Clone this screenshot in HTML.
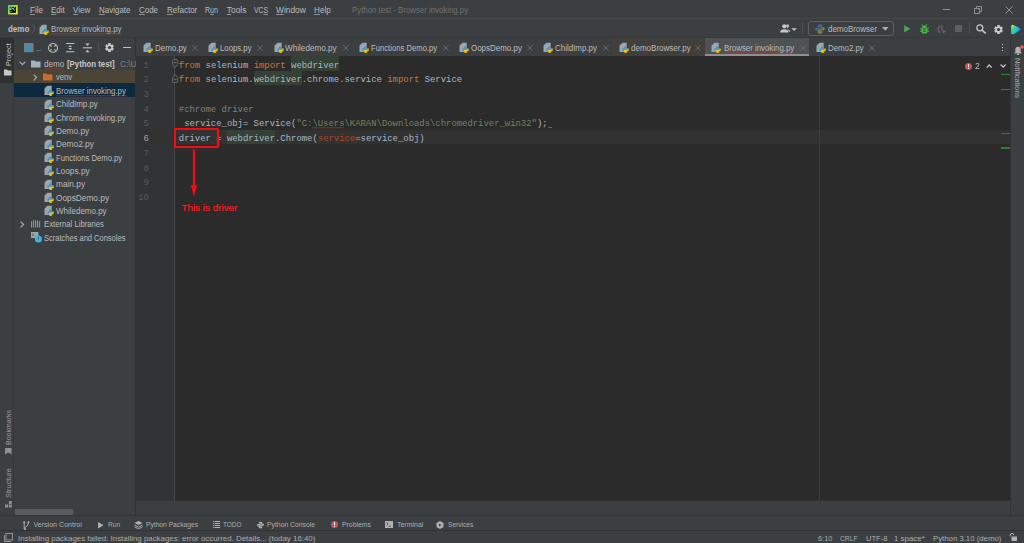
<!DOCTYPE html>
<html><head><meta charset="utf-8">
<style>
*{margin:0;padding:0;box-sizing:border-box}
html,body{width:1024px;height:543px;overflow:hidden;background:#3c3f41;font-family:"Liberation Sans",sans-serif;color:#bbbbbb}
.a{position:absolute}
.t{white-space:pre;line-height:1}
svg.a{overflow:visible}
</style></head><body>
<svg width="0" height="0" style="position:absolute">
<defs>
<symbol id="py" viewBox="0 0 11 11">
<path d="M0.5 3.6L3.3 0.8H7.7V10H0.5Z" fill="#9ba6ae"/>
<path d="M0.5 2.9L2.6 0.8V2.9Z" fill="#9ba6ae"/>
<path d="M0.5 3.5L3.4 0.6" stroke="#3c3f41" stroke-width="0.7"/>
<g transform="translate(3.4 4.5) scale(0.64)">
<path d="M4.9 0C2.4 0 2.5 1.1 2.5 1.1V2.2H5V2.6H1.5C1.5 2.6 0 2.4 0 5C0 7.5 1.3 7.4 1.3 7.4H2.2V6.2C2.2 6.2 2.1 4.9 3.5 4.9H5.9C5.9 4.9 7.2 4.9 7.2 3.7V1.5C7.2 1.5 7.4 0 4.9 0Z" fill="#3b97d3"/>
<path d="M5.1 10C7.6 10 7.5 8.9 7.5 8.9V7.8H5V7.4H8.5C8.5 7.4 10 7.6 10 5C10 2.5 8.7 2.6 8.7 2.6H7.8V3.8C7.8 3.8 7.9 5.1 6.5 5.1H4.1C4.1 5.1 2.8 5.1 2.8 6.3V8.5C2.8 8.5 2.6 10 5.1 10Z" fill="#f5c30c"/>
</g>
</symbol>
</defs></svg>

<div class="a" style="left:0px;top:0px;width:1024px;height:18px;background:#3c3f41;"></div>
<div class="a" style="left:0px;top:18px;width:1024px;height:1px;background:#464646;"></div>
<svg class="a" style="left:8.4px;top:4.7px" width="10" height="10" viewBox="0 0 10 10"><defs><linearGradient id="lg" x1="0" y1="0" x2="1" y2="1"><stop offset="0" stop-color="#21d789"/><stop offset="0.55" stop-color="#b5e61d"/><stop offset="1" stop-color="#fcf84a"/></linearGradient></defs><rect x="0" y="0" width="9.7" height="9.4" fill="url(#lg)"/><rect x="1.8" y="1.9" width="6.1" height="5.9" fill="#000"/><path d="M2.6 5.2V2.8H3.8Q4.6 2.8 4.6 3.5Q4.6 4.2 3.8 4.2H2.6" fill="none" stroke="#d8d8d8" stroke-width="0.8"/><path d="M7.2 3.1Q6.9 2.8 6.3 2.8Q5.2 2.8 5.2 4Q5.2 5.2 6.3 5.2Q6.9 5.2 7.2 4.9" fill="none" stroke="#d8d8d8" stroke-width="0.8"/><rect x="2.4" y="6.4" width="1.8" height="0.6" fill="#bbb"/></svg>
<div class="a t" style="left:29.5px;top:5.76px;font-family:'Liberation Sans',sans-serif;font-size:8.400px;transform-origin:0 0;transform:scaleX(0.963);color:#bbbbbb;font-weight:normal;"><span style="text-decoration:underline;text-decoration-color:#8f8f8f;text-underline-offset:1px">F</span>ile</div>
<div class="a t" style="left:50.6px;top:5.76px;font-family:'Liberation Sans',sans-serif;font-size:8.400px;transform-origin:0 0;transform:scaleX(0.953);color:#bbbbbb;font-weight:normal;"><span style="text-decoration:underline;text-decoration-color:#8f8f8f;text-underline-offset:1px">E</span>dit</div>
<div class="a t" style="left:72.6px;top:5.76px;font-family:'Liberation Sans',sans-serif;font-size:8.400px;transform-origin:0 0;transform:scaleX(0.956);color:#bbbbbb;font-weight:normal;"><span style="text-decoration:underline;text-decoration-color:#8f8f8f;text-underline-offset:1px">V</span>iew</div>
<div class="a t" style="left:98.9px;top:5.76px;font-family:'Liberation Sans',sans-serif;font-size:8.400px;transform-origin:0 0;transform:scaleX(0.952);color:#bbbbbb;font-weight:normal;"><span style="text-decoration:underline;text-decoration-color:#8f8f8f;text-underline-offset:1px">N</span>avigate</div>
<div class="a t" style="left:138.8px;top:5.76px;font-family:'Liberation Sans',sans-serif;font-size:8.400px;transform-origin:0 0;transform:scaleX(0.950);color:#bbbbbb;font-weight:normal;"><span style="text-decoration:underline;text-decoration-color:#8f8f8f;text-underline-offset:1px">C</span>ode</div>
<div class="a t" style="left:166.7px;top:5.76px;font-family:'Liberation Sans',sans-serif;font-size:8.400px;transform-origin:0 0;transform:scaleX(0.956);color:#bbbbbb;font-weight:normal;"><span style="text-decoration:underline;text-decoration-color:#8f8f8f;text-underline-offset:1px">R</span>efactor</div>
<div class="a t" style="left:204.8px;top:5.76px;font-family:'Liberation Sans',sans-serif;font-size:8.400px;transform-origin:0 0;transform:scaleX(0.842);color:#bbbbbb;font-weight:normal;">R<span style="text-decoration:underline;text-decoration-color:#8f8f8f;text-underline-offset:1px">u</span>n</div>
<div class="a t" style="left:226.8px;top:5.76px;font-family:'Liberation Sans',sans-serif;font-size:8.400px;color:#bbbbbb;font-weight:normal;"><span style="text-decoration:underline;text-decoration-color:#8f8f8f;text-underline-offset:1px">T</span>ools</div>
<div class="a t" style="left:254px;top:5.76px;font-family:'Liberation Sans',sans-serif;font-size:8.400px;transform-origin:0 0;transform:scaleX(0.813);color:#bbbbbb;font-weight:normal;">VC<span style="text-decoration:underline;text-decoration-color:#8f8f8f;text-underline-offset:1px">S</span></div>
<div class="a t" style="left:276px;top:5.76px;font-family:'Liberation Sans',sans-serif;font-size:8.400px;color:#bbbbbb;font-weight:normal;"><span style="text-decoration:underline;text-decoration-color:#8f8f8f;text-underline-offset:1px">W</span>indow</div>
<div class="a t" style="left:314.3px;top:5.76px;font-family:'Liberation Sans',sans-serif;font-size:8.400px;transform-origin:0 0;transform:scaleX(0.971);color:#bbbbbb;font-weight:normal;"><span style="text-decoration:underline;text-decoration-color:#8f8f8f;text-underline-offset:1px">H</span>elp</div>
<div class="a t" style="left:352.2px;top:5.84px;font-family:'Liberation Sans',sans-serif;font-size:8.300px;transform-origin:0 0;transform:scaleX(0.943);color:#6f6f6f;font-weight:normal;">Python test - Browser invoking.py</div>
<div class="a" style="left:943px;top:9px;width:7px;height:1px;background:#8e8e8e;"></div>
<svg class="a" style="left:974px;top:6px" width="8" height="8"><rect x="0.5" y="2.5" width="5" height="5" fill="none" stroke="#8e8e8e"/><path d="M2.5 2.5V0.5H7.5V5.5H5.5" fill="none" stroke="#8e8e8e"/></svg>
<svg class="a" style="left:1005px;top:6px" width="8" height="8"><path d="M0.5 0.5L7.5 7.5M7.5 0.5L0.5 7.5" stroke="#8e8e8e" stroke-width="1"/></svg>
<div class="a" style="left:0px;top:19px;width:1024px;height:19px;background:#3c3f41;"></div>
<div class="a" style="left:0px;top:37px;width:1024px;height:1px;background:#37393b;"></div>
<div class="a t" style="left:8.3px;top:24.95px;font-family:'Liberation Sans',sans-serif;font-size:8.300px;transform-origin:0 0;transform:scaleX(0.960);color:#c0c0c0;font-weight:bold;">demo</div>
<svg class="a" style="left:31px;top:23px" width="5" height="11"><path d="M0.8 0.5L4 5.5L0.8 10.5" fill="none" stroke="#5e6060" stroke-width="0.9"/></svg>
<svg class="a" style="left:39px;top:24px" width="11" height="11" viewBox="0 0 11 11"><use href="#py"/></svg>
<div class="a t" style="left:50.8px;top:24.95px;font-family:'Liberation Sans',sans-serif;font-size:8.300px;transform-origin:0 0;transform:scaleX(0.949);color:#bbbbbb;font-weight:normal;">Browser invoking.py</div>
<svg class="a" style="left:51px;top:33px" width="71" height="2"><path d="M0 1.2L1.0 0.4L2.0 1.2L3.0 0.4L4.0 1.2L5.0 0.4L6.0 1.2L7.0 0.4L8.0 1.2L9.0 0.4L10.0 1.2L11.0 0.4L12.0 1.2L13.0 0.4L14.0 1.2L15.0 0.4L16.0 1.2L17.0 0.4L18.0 1.2L19.0 0.4L20.0 1.2L21.0 0.4L22.0 1.2L23.0 0.4L24.0 1.2L25.0 0.4L26.0 1.2L27.0 0.4L28.0 1.2L29.0 0.4L30.0 1.2L31.0 0.4L32.0 1.2L33.0 0.4L34.0 1.2L35.0 0.4L36.0 1.2L37.0 0.4L38.0 1.2L39.0 0.4L40.0 1.2L41.0 0.4L42.0 1.2L43.0 0.4L44.0 1.2L45.0 0.4L46.0 1.2L47.0 0.4L48.0 1.2L49.0 0.4L50.0 1.2L51.0 0.4L52.0 1.2L53.0 0.4L54.0 1.2L55.0 0.4L56.0 1.2L57.0 0.4L58.0 1.2L59.0 0.4L60.0 1.2L61.0 0.4L62.0 1.2L63.0 0.4L64.0 1.2L65.0 0.4L66.0 1.2L67.0 0.4L68.0 1.2L69.0 0.4L70.0 1.2" fill="none" stroke="#bc3f3c" stroke-width="0.7" opacity="0.85"/></svg>
<svg class="a" style="left:779.5px;top:24.3px" width="18" height="10"><path d="M6 1.8Q6 0.2 7.6 0.2Q9.2 0.2 9.2 1.9Q9.2 3.6 7.6 3.8V5.3Q10.3 5.6 10.3 7.8H8.8Z" fill="#b4b6b8"/><circle cx="4.3" cy="2.3" r="2.1" fill="#c4c6c8"/><path d="M0.2 8.5Q0.2 5.3 4.3 5.3Q8.4 5.3 8.4 8.5Z" fill="#c4c6c8"/><path d="M11.4 4.3H16.8L14.1 6.9Z" fill="#c4c6c8"/></svg>
<div class="a" style="left:802px;top:22px;width:1px;height:12px;background:#4a4c4e;"></div>
<div class="a" style="left:808px;top:21px;width:86px;height:15px;border:1px solid #5e6060;border-radius:3px"></div>
<svg class="a" style="left:815px;top:23.5px" width="10" height="10" viewBox="0 0 10 10"><path d="M5 0.3Q2.6 0.3 2.6 1.6V3H5.2V3.5H1.6Q0.2 3.5 0.2 5.3Q0.2 7.1 1.6 7.1H2.6V5.8Q2.6 4.7 3.7 4.7H6.3Q7.3 4.7 7.3 3.7V1.6Q7.3 0.3 5 0.3Z" fill="#3d6a88"/><path d="M5 9.7Q7.4 9.7 7.4 8.4V7H4.8V6.5H8.4Q9.8 6.5 9.8 4.7Q9.8 2.9 8.4 2.9H7.4V4.2Q7.4 5.3 6.3 5.3H3.7Q2.7 5.3 2.7 6.3V8.4Q2.7 9.7 5 9.7Z" fill="#8a7b3a"/></svg>
<div class="a t" style="left:827.5px;top:24.95px;font-family:'Liberation Sans',sans-serif;font-size:8.300px;transform-origin:0 0;transform:scaleX(0.959);color:#bbbbbb;font-weight:normal;">demoBrowser</div>
<svg class="a" style="left:882px;top:26.5px" width="7" height="5"><path d="M0 0H6.5L3.25 3.8Z" fill="#afb1b3"/></svg>
<svg class="a" style="left:903.8px;top:25px" width="7" height="8"><path d="M0.2 0.2L6.4 3.8L0.2 7.4Z" fill="#4ea257"/></svg>
<svg class="a" style="left:919.5px;top:24.4px" width="9" height="10" viewBox="0 0 9 10"><path d="M2 0.3L3.2 1.8M7 0.3L5.8 1.8" stroke="#4fb34f" stroke-width="1"/><path d="M2.2 2.2Q4.5 0.9 6.8 2.2V3H2.2Z" fill="#4fb34f"/><rect x="1.4" y="3" width="6.2" height="6.6" rx="2.6" fill="#4fb34f"/><path d="M0 4.2H1.6M7.4 4.2H9M0 7.2H1.6M7.4 7.2H9" stroke="#4fb34f" stroke-width="1"/><rect x="3.2" y="4.4" width="2.6" height="1" fill="#2b3a2b"/><rect x="3.2" y="6.6" width="2.6" height="1" fill="#2b3a2b"/></svg>
<svg class="a" style="left:936.8px;top:25px" width="10" height="9"><path d="M3.5 0.3Q0.3 0.3 0.3 4.2Q0.3 8 3.5 8V6.2Q2.1 6.2 2.1 4.2Q2.1 2.1 3.5 2.1Z" fill="#5c5f61"/><path d="M4 0.3H5.6V5.3H4Z" fill="#5c5f61"/><path d="M5.6 4.2L9.4 6.4L5.6 8.6Z" fill="#5c5f61"/></svg>
<div class="a" style="left:955px;top:25.4px;width:7px;height:6.8px;background:#5c5f61;"></div>
<div class="a" style="left:969px;top:22px;width:1px;height:12px;background:#4a4c4e;"></div>
<svg class="a" style="left:975.5px;top:24px" width="11" height="11"><circle cx="3.8" cy="3.8" r="3" fill="none" stroke="#c8c8c8" stroke-width="1.3"/><path d="M6 6L9.6 9.4" stroke="#c8c8c8" stroke-width="1.6"/></svg>
<svg class="a" style="left:993.6px;top:24.5px" width="9" height="9" viewBox="0 0 8.4 8.4"><path d="M2.98 0.08L5.42 0.08L5.30 1.19L6.25 1.75L7.16 1.08L8.38 3.20L7.35 3.65L7.35 4.75L8.38 5.20L7.16 7.32L6.25 6.65L5.30 7.21L5.42 8.32L2.98 8.32L3.10 7.21L2.15 6.65L1.24 7.32L0.02 5.20L1.05 4.75L1.05 3.65L0.02 3.20L1.24 1.08L2.15 1.75L3.10 1.19Z" fill="#c8c8c8"/><circle cx="4.2" cy="4.2" r="1.5" fill="#3c3f41"/></svg>
<svg class="a" style="left:1010.5px;top:23.6px" width="10" height="11" viewBox="0 0 10 10.4"><defs><linearGradient id="tb" x1="0" y1="0" x2="1" y2="0.6"><stop offset="0" stop-color="#f2ef5a"/><stop offset="0.35" stop-color="#3fd880"/><stop offset="0.65" stop-color="#22c3e6"/><stop offset="1" stop-color="#2160c8"/></linearGradient></defs><path d="M0.2 2.2Q0.2 -0.3 2.6 0.7L8.8 4Q10.4 5.2 8.8 6.4L2.6 9.7Q0.2 10.9 0.2 8.2Z" fill="url(#tb)"/></svg>
<div class="a" style="left:0px;top:38px;width:14px;height:478px;background:#3c3f41;"></div>
<div class="a" style="left:13px;top:38px;width:1px;height:478px;background:#37393b;"></div>
<div class="a" style="left:0px;top:38px;width:13.6px;height:44.5px;background:#2e3032;"></div>
<div class="a t" style="left:5px;top:65.5px;transform-origin:0 0;transform:rotate(-90deg);font-family:'Liberation Sans',sans-serif;font-size:7.3px;color:#bbbbbb;width:22px;height:7px;line-height:7px">Project</div>
<svg class="a" style="left:4px;top:68.8px" width="8" height="7"><path d="M0 0.5H3L4 1.5H7.5V6.5H0Z" fill="#c5c8ca"/></svg>
<div class="a t" style="left:5px;top:445px;transform-origin:0 0;transform:rotate(-90deg);font-family:'Liberation Sans',sans-serif;font-size:7.0px;color:#9c9c9c;width:35px;height:7px;line-height:7px">Bookmarks</div>
<svg class="a" style="left:4.5px;top:448px" width="7" height="7"><path d="M0 0H6.5V6.5L3.25 4.6L0 6.5Z" fill="#8e9092"/></svg>
<div class="a t" style="left:5px;top:497.5px;transform-origin:0 0;transform:rotate(-90deg);font-family:'Liberation Sans',sans-serif;font-size:7.35px;color:#9c9c9c;width:28px;height:7px;line-height:7px">Structure</div>
<svg class="a" style="left:4.5px;top:500.5px" width="7" height="7"><rect x="0" y="3.5" width="3" height="3" fill="#8e9092"/><rect x="3.8" y="3.5" width="3" height="3" fill="#8e9092"/><rect x="3.8" y="0" width="3" height="3" fill="#8e9092"/></svg>
<div class="a" style="left:14px;top:38px;width:122px;height:478px;background:#3c3f41;"></div>
<div class="a" style="left:135px;top:38px;width:1px;height:478px;background:#323334;"></div>
<svg class="a" style="left:23.5px;top:43.1px" width="10" height="10"><rect x="0" y="0" width="9.5" height="9.2" fill="#7b7e80"/><rect x="1.3" y="1.9" width="6.9" height="6" fill="#3a8fb3"/></svg>
<div class="a" style="left:36px;top:49.6px;width:5px;height:1px;background:#55656f;"></div>
<svg class="a" style="left:47.7px;top:42.7px" width="11" height="10"><circle cx="5" cy="4.9" r="4.4" fill="none" stroke="#c0c0c0" stroke-width="1.1"/><path d="M2.2 2.1L3.6 3.5M7.8 2.1L6.4 3.5M2.2 7.7L3.6 6.3M7.8 7.7L6.4 6.3" stroke="#c0c0c0" stroke-width="1.1"/></svg>
<svg class="a" style="left:65.7px;top:43px" width="9" height="10"><path d="M0 0.5H8.4M0 8.7H8.4" stroke="#c0c0c0" stroke-width="1.1"/><path d="M2.3 4.1L4.2 2.2L6.1 4.1ZM2.3 5.1L4.2 7L6.1 5.1Z" fill="#c0c0c0"/></svg>
<svg class="a" style="left:82.8px;top:42.8px" width="9" height="10"><path d="M0 4.8H9" stroke="#c0c0c0" stroke-width="1.1"/><path d="M2.4 0.4L4.5 2.9L6.6 0.4ZM2.4 9.3L4.5 6.8L6.6 9.3Z" fill="#c0c0c0"/></svg>
<div class="a" style="left:98px;top:42px;width:1px;height:11px;background:#4c4e50;"></div>
<svg class="a" style="left:105px;top:42.7px" width="9" height="9" viewBox="0 0 8.4 8.4"><path d="M2.98 0.08L5.42 0.08L5.30 1.19L6.25 1.75L7.16 1.08L8.38 3.20L7.35 3.65L7.35 4.75L8.38 5.20L7.16 7.32L6.25 6.65L5.30 7.21L5.42 8.32L2.98 8.32L3.10 7.21L2.15 6.65L1.24 7.32L0.02 5.20L1.05 4.75L1.05 3.65L0.02 3.20L1.24 1.08L2.15 1.75L3.10 1.19Z" fill="#c8c8c8"/><circle cx="4.2" cy="4.2" r="1.5" fill="#3c3f41"/></svg>
<div class="a" style="left:123px;top:47px;width:8px;height:1.2px;background:#c0c0c0;"></div>
<div class="a" style="left:14px;top:69.85px;width:121px;height:13.35px;background:#4a4537;"></div>
<div class="a" style="left:14px;top:83.2px;width:121px;height:13.35px;background:#0d293e;"></div>
<svg class="a" style="left:19px;top:61.00px" width="7" height="5"><path d="M0.6 0.6L3.5 3.6L6.4 0.6" fill="none" stroke="#a8a8a8" stroke-width="1.25"/></svg>
<svg class="a" style="left:31px;top:59.50px" width="10" height="8"><path d="M0 0.5H3.5L4.5 1.6H9.5V7.5H0Z" fill="#a4b2bd"/></svg>
<div class="a t" style="left:43.5px;top:60.15px;font-family:'Liberation Sans',sans-serif;font-size:8.300px;transform-origin:0 0;transform:scaleX(0.977);color:#bbbbbb;font-weight:normal;">demo</div>
<div class="a t" style="left:67px;top:60.15px;font-family:'Liberation Sans',sans-serif;font-size:8.300px;transform-origin:0 0;transform:scaleX(0.941);color:#c8c8c8;font-weight:bold;">[Python test]</div>
<div class="a t" style="left:120px;top:60.15px;font-family:'Liberation Sans',sans-serif;font-size:8.3px;color:#7f7f7f;font-weight:normal;">C:\Users\KARAN\PycharmProjects\demo</div>
<svg class="a" style="left:43.5px;top:67.8px" width="21.5" height="2"><path d="M0 1.2L1.0 0.4L2.0 1.2L3.0 0.4L4.0 1.2L5.0 0.4L6.0 1.2L7.0 0.4L8.0 1.2L9.0 0.4L10.0 1.2L11.0 0.4L12.0 1.2L13.0 0.4L14.0 1.2L15.0 0.4L16.0 1.2L17.0 0.4L18.0 1.2L19.0 0.4L20.0 1.2" fill="none" stroke="#bc3f3c" stroke-width="0.7" opacity="0.85"/></svg>
<svg class="a" style="left:33px;top:73.65px" width="5" height="7"><path d="M0.6 0.6L3.6 3.5L0.6 6.4" fill="none" stroke="#a8a8a8" stroke-width="1.25"/></svg>
<svg class="a" style="left:43px;top:72.85px" width="10" height="8"><path d="M0 0.5H3.5L4.5 1.6H9.5V7.5H0Z" fill="#c96c2e"/></svg>
<div class="a t" style="left:55.5px;top:73.49px;font-family:'Liberation Sans',sans-serif;font-size:8.300px;transform-origin:0 0;transform:scaleX(0.918);color:#bbbbbb;font-weight:normal;">venv</div>
<svg class="a" style="left:44px;top:85.2px" width="11" height="11" viewBox="0 0 11 11"><use href="#py"/></svg>
<svg class="a" style="left:56px;top:94.5px" width="72" height="2"><path d="M0 1.2L1.0 0.4L2.0 1.2L3.0 0.4L4.0 1.2L5.0 0.4L6.0 1.2L7.0 0.4L8.0 1.2L9.0 0.4L10.0 1.2L11.0 0.4L12.0 1.2L13.0 0.4L14.0 1.2L15.0 0.4L16.0 1.2L17.0 0.4L18.0 1.2L19.0 0.4L20.0 1.2L21.0 0.4L22.0 1.2L23.0 0.4L24.0 1.2L25.0 0.4L26.0 1.2L27.0 0.4L28.0 1.2L29.0 0.4L30.0 1.2L31.0 0.4L32.0 1.2L33.0 0.4L34.0 1.2L35.0 0.4L36.0 1.2L37.0 0.4L38.0 1.2L39.0 0.4L40.0 1.2L41.0 0.4L42.0 1.2L43.0 0.4L44.0 1.2L45.0 0.4L46.0 1.2L47.0 0.4L48.0 1.2L49.0 0.4L50.0 1.2L51.0 0.4L52.0 1.2L53.0 0.4L54.0 1.2L55.0 0.4L56.0 1.2L57.0 0.4L58.0 1.2L59.0 0.4L60.0 1.2L61.0 0.4L62.0 1.2L63.0 0.4L64.0 1.2L65.0 0.4L66.0 1.2L67.0 0.4L68.0 1.2L69.0 0.4L70.0 1.2L71.0 0.4" fill="none" stroke="#bc3f3c" stroke-width="0.7" opacity="0.85"/></svg>
<div class="a t" style="left:56px;top:86.84px;font-family:'Liberation Sans',sans-serif;font-size:8.300px;transform-origin:0 0;transform:scaleX(0.941);color:#bbbbbb;font-weight:normal;">Browser invoking.py</div>
<svg class="a" style="left:44px;top:98.55px" width="11" height="11" viewBox="0 0 11 11"><use href="#py"/></svg>
<div class="a t" style="left:56px;top:100.19px;font-family:'Liberation Sans',sans-serif;font-size:8.300px;transform-origin:0 0;transform:scaleX(0.955);color:#bbbbbb;font-weight:normal;">ChildImp.py</div>
<svg class="a" style="left:44px;top:111.9px" width="11" height="11" viewBox="0 0 11 11"><use href="#py"/></svg>
<div class="a t" style="left:56px;top:113.55px;font-family:'Liberation Sans',sans-serif;font-size:8.300px;transform-origin:0 0;transform:scaleX(0.951);color:#bbbbbb;font-weight:normal;">Chrome invoking.py</div>
<svg class="a" style="left:44px;top:125.25px" width="11" height="11" viewBox="0 0 11 11"><use href="#py"/></svg>
<div class="a t" style="left:56px;top:126.89px;font-family:'Liberation Sans',sans-serif;font-size:8.3px;color:#bbbbbb;font-weight:normal;">Demo.py</div>
<svg class="a" style="left:44px;top:138.6px" width="11" height="11" viewBox="0 0 11 11"><use href="#py"/></svg>
<div class="a t" style="left:56px;top:140.24px;font-family:'Liberation Sans',sans-serif;font-size:8.3px;color:#bbbbbb;font-weight:normal;">Demo2.py</div>
<svg class="a" style="left:44px;top:151.95px" width="11" height="11" viewBox="0 0 11 11"><use href="#py"/></svg>
<div class="a t" style="left:56px;top:153.59px;font-family:'Liberation Sans',sans-serif;font-size:8.300px;transform-origin:0 0;transform:scaleX(0.926);color:#bbbbbb;font-weight:normal;">Functions Demo.py</div>
<svg class="a" style="left:44px;top:165.3px" width="11" height="11" viewBox="0 0 11 11"><use href="#py"/></svg>
<div class="a t" style="left:56px;top:166.94px;font-family:'Liberation Sans',sans-serif;font-size:8.3px;color:#bbbbbb;font-weight:normal;">Loops.py</div>
<svg class="a" style="left:44px;top:178.64999999999998px" width="11" height="11" viewBox="0 0 11 11"><use href="#py"/></svg>
<div class="a t" style="left:56px;top:180.29px;font-family:'Liberation Sans',sans-serif;font-size:8.3px;color:#bbbbbb;font-weight:normal;">main.py</div>
<svg class="a" style="left:44px;top:192.0px" width="11" height="11" viewBox="0 0 11 11"><use href="#py"/></svg>
<div class="a t" style="left:56px;top:193.64px;font-family:'Liberation Sans',sans-serif;font-size:8.3px;color:#bbbbbb;font-weight:normal;">OopsDemo.py</div>
<svg class="a" style="left:44px;top:205.35px" width="11" height="11" viewBox="0 0 11 11"><use href="#py"/></svg>
<div class="a t" style="left:56px;top:206.99px;font-family:'Liberation Sans',sans-serif;font-size:8.300px;transform-origin:0 0;transform:scaleX(0.962);color:#bbbbbb;font-weight:normal;">Whiledemo.py</div>
<svg class="a" style="left:20px;top:220.50px" width="5" height="7"><path d="M0.6 0.6L3.6 3.5L0.6 6.4" fill="none" stroke="#a8a8a8" stroke-width="1.25"/></svg>
<svg class="a" style="left:31.3px;top:219.50px" width="10" height="9"><path d="M0.6 1.2V7.6" stroke="#8a9399" stroke-width="1.1"/><path d="M2.6 0.2V7.6" stroke="#8a9399" stroke-width="1.1"/><path d="M4.6 0.2V7.6" stroke="#62b543" stroke-width="1.1"/><path d="M6.6 0.2V7.6" stroke="#40b6e0" stroke-width="1.1"/><path d="M8.6 1.2V7.6" stroke="#8a9399" stroke-width="1.1"/></svg>
<div class="a t" style="left:43.8px;top:220.34px;font-family:'Liberation Sans',sans-serif;font-size:8.300px;transform-origin:0 0;transform:scaleX(0.929);color:#bbbbbb;font-weight:normal;">External Libraries</div>
<svg class="a" style="left:30.9px;top:232.05px" width="12" height="12"><rect x="0" y="0" width="7.4" height="6" fill="#9aa4ab"/><path d="M1.2 1.3L2.6 2.8L1.2 4.3" fill="none" stroke="#3c3f41" stroke-width="0.8"/><circle cx="7.4" cy="6.9" r="3.5" fill="#3fb4e2"/><path d="M7.3 4.8V7.4" stroke="#2a5a70" stroke-width="0.9"/></svg>
<div class="a t" style="left:43.6px;top:233.69px;font-family:'Liberation Sans',sans-serif;font-size:8.300px;transform-origin:0 0;transform:scaleX(0.905);color:#bbbbbb;font-weight:normal;">Scratches and Consoles</div>
<div class="a" style="left:15px;top:509.2px;width:57.7px;height:5.6px;background:#595b5d;"></div>
<div class="a" style="left:136px;top:38px;width:874px;height:18px;background:#3c3f41;"></div>
<div class="a" style="left:136px;top:55.6px;width:874px;height:0.6px;background:#323334;"></div>
<div class="a" style="left:612px;top:38px;width:92.7px;height:17.6px;background:#403f3b;"></div>
<div class="a" style="left:704.7px;top:38px;width:104.3px;height:17.6px;background:#4e5254;"></div>
<div class="a" style="left:704.7px;top:54px;width:104.3px;height:2px;background:#8d8f91;"></div>
<svg class="a" style="left:142.5px;top:42px" width="11" height="11" viewBox="0 0 11 11"><use href="#py"/></svg>
<div class="a t" style="left:154.7px;top:44.15px;font-family:'Liberation Sans',sans-serif;font-size:8.300px;transform-origin:0 0;transform:scaleX(0.958);color:#bbbbbb;font-weight:normal;">Demo.py</div>
<svg class="a" style="left:191.8px;top:44.5px" width="6" height="6"><path d="M0.3 0.3L5.5 5.5M5.5 0.3L0.3 5.5" stroke="#6a6c6e" stroke-width="0.9"/></svg>
<svg class="a" style="left:208.1px;top:42px" width="11" height="11" viewBox="0 0 11 11"><use href="#py"/></svg>
<div class="a t" style="left:220.4px;top:44.15px;font-family:'Liberation Sans',sans-serif;font-size:8.300px;transform-origin:0 0;transform:scaleX(0.936);color:#bbbbbb;font-weight:normal;">Loops.py</div>
<svg class="a" style="left:256.7px;top:44.5px" width="6" height="6"><path d="M0.3 0.3L5.5 5.5M5.5 0.3L0.3 5.5" stroke="#6a6c6e" stroke-width="0.9"/></svg>
<svg class="a" style="left:273.8px;top:42px" width="11" height="11" viewBox="0 0 11 11"><use href="#py"/></svg>
<div class="a t" style="left:285.3px;top:44.15px;font-family:'Liberation Sans',sans-serif;font-size:8.300px;transform-origin:0 0;transform:scaleX(0.983);color:#bbbbbb;font-weight:normal;">Whiledemo.py</div>
<svg class="a" style="left:343px;top:44.5px" width="6" height="6"><path d="M0.3 0.3L5.5 5.5M5.5 0.3L0.3 5.5" stroke="#6a6c6e" stroke-width="0.9"/></svg>
<svg class="a" style="left:358.7px;top:42px" width="11" height="11" viewBox="0 0 11 11"><use href="#py"/></svg>
<div class="a t" style="left:370.6px;top:44.15px;font-family:'Liberation Sans',sans-serif;font-size:8.300px;transform-origin:0 0;transform:scaleX(0.926);color:#bbbbbb;font-weight:normal;">Functions Demo.py</div>
<svg class="a" style="left:442.8px;top:44.5px" width="6" height="6"><path d="M0.3 0.3L5.5 5.5M5.5 0.3L0.3 5.5" stroke="#6a6c6e" stroke-width="0.9"/></svg>
<svg class="a" style="left:458.9px;top:42px" width="11" height="11" viewBox="0 0 11 11"><use href="#py"/></svg>
<div class="a t" style="left:471.3px;top:44.15px;font-family:'Liberation Sans',sans-serif;font-size:8.300px;transform-origin:0 0;transform:scaleX(0.959);color:#bbbbbb;font-weight:normal;">OopsDemo.py</div>
<svg class="a" style="left:527px;top:44.5px" width="6" height="6"><path d="M0.3 0.3L5.5 5.5M5.5 0.3L0.3 5.5" stroke="#6a6c6e" stroke-width="0.9"/></svg>
<svg class="a" style="left:543.3px;top:42px" width="11" height="11" viewBox="0 0 11 11"><use href="#py"/></svg>
<div class="a t" style="left:554.9px;top:44.15px;font-family:'Liberation Sans',sans-serif;font-size:8.300px;transform-origin:0 0;transform:scaleX(0.959);color:#bbbbbb;font-weight:normal;">ChildImp.py</div>
<svg class="a" style="left:603px;top:44.5px" width="6" height="6"><path d="M0.3 0.3L5.5 5.5M5.5 0.3L0.3 5.5" stroke="#6a6c6e" stroke-width="0.9"/></svg>
<svg class="a" style="left:619.2px;top:42px" width="11" height="11" viewBox="0 0 11 11"><use href="#py"/></svg>
<div class="a t" style="left:631.3px;top:44.15px;font-family:'Liberation Sans',sans-serif;font-size:8.300px;transform-origin:0 0;transform:scaleX(0.966);color:#bbbbbb;font-weight:normal;">demoBrowser.py</div>
<svg class="a" style="left:695px;top:44.5px" width="6" height="6"><path d="M0.3 0.3L5.5 5.5M5.5 0.3L0.3 5.5" stroke="#6a6c6e" stroke-width="0.9"/></svg>
<svg class="a" style="left:711.4px;top:42px" width="11" height="11" viewBox="0 0 11 11"><use href="#py"/></svg>
<svg class="a" style="left:723.8px;top:51.8px" width="71" height="2"><path d="M0 1.2L1.0 0.4L2.0 1.2L3.0 0.4L4.0 1.2L5.0 0.4L6.0 1.2L7.0 0.4L8.0 1.2L9.0 0.4L10.0 1.2L11.0 0.4L12.0 1.2L13.0 0.4L14.0 1.2L15.0 0.4L16.0 1.2L17.0 0.4L18.0 1.2L19.0 0.4L20.0 1.2L21.0 0.4L22.0 1.2L23.0 0.4L24.0 1.2L25.0 0.4L26.0 1.2L27.0 0.4L28.0 1.2L29.0 0.4L30.0 1.2L31.0 0.4L32.0 1.2L33.0 0.4L34.0 1.2L35.0 0.4L36.0 1.2L37.0 0.4L38.0 1.2L39.0 0.4L40.0 1.2L41.0 0.4L42.0 1.2L43.0 0.4L44.0 1.2L45.0 0.4L46.0 1.2L47.0 0.4L48.0 1.2L49.0 0.4L50.0 1.2L51.0 0.4L52.0 1.2L53.0 0.4L54.0 1.2L55.0 0.4L56.0 1.2L57.0 0.4L58.0 1.2L59.0 0.4L60.0 1.2L61.0 0.4L62.0 1.2L63.0 0.4L64.0 1.2L65.0 0.4L66.0 1.2L67.0 0.4L68.0 1.2L69.0 0.4L70.0 1.2" fill="none" stroke="#bc3f3c" stroke-width="0.7" opacity="0.85"/></svg>
<div class="a t" style="left:723.8px;top:44.15px;font-family:'Liberation Sans',sans-serif;font-size:8.300px;transform-origin:0 0;transform:scaleX(0.946);color:#bbbbbb;font-weight:normal;">Browser invoking.py</div>
<svg class="a" style="left:800px;top:44.5px" width="6" height="6"><path d="M0.3 0.3L5.5 5.5M5.5 0.3L0.3 5.5" stroke="#6a6c6e" stroke-width="0.9"/></svg>
<svg class="a" style="left:816.1px;top:42px" width="11" height="11" viewBox="0 0 11 11"><use href="#py"/></svg>
<div class="a t" style="left:827.5px;top:44.15px;font-family:'Liberation Sans',sans-serif;font-size:8.300px;transform-origin:0 0;transform:scaleX(0.945);color:#bbbbbb;font-weight:normal;">Demo2.py</div>
<svg class="a" style="left:869px;top:44.5px" width="6" height="6"><path d="M0.3 0.3L5.5 5.5M5.5 0.3L0.3 5.5" stroke="#6a6c6e" stroke-width="0.9"/></svg>
<div class="a" style="left:1001.6px;top:43.8px;width:1.7px;height:1.7px;background:#c0c0c0;"></div>
<div class="a" style="left:1001.6px;top:46.8px;width:1.7px;height:1.7px;background:#c0c0c0;"></div>
<div class="a" style="left:1001.6px;top:49.8px;width:1.7px;height:1.7px;background:#c0c0c0;"></div>
<div class="a" style="left:136px;top:56px;width:39px;height:444px;background:#313335;"></div>
<div class="a" style="left:175px;top:56px;width:835px;height:444px;background:#2b2b2b;"></div>
<div class="a" style="left:136px;top:129.7px;width:874px;height:14.74px;background:#323232;"></div>
<div class="a" style="left:174px;top:56px;width:1px;height:444px;background:#464646;"></div>
<div class="a" style="left:818.9px;top:56px;width:0.8px;height:444px;background:#3d3d3d;"></div>
<div class="a t" style="left:143.46300000000002px;top:61.53px;font-family:'Liberation Mono',monospace;font-size:8.92px;color:#56595c;font-weight:normal;">1</div>
<div class="a t" style="left:143.46300000000002px;top:76.27px;font-family:'Liberation Mono',monospace;font-size:8.92px;color:#56595c;font-weight:normal;">2</div>
<div class="a t" style="left:143.46300000000002px;top:91.01px;font-family:'Liberation Mono',monospace;font-size:8.92px;color:#56595c;font-weight:normal;">3</div>
<div class="a t" style="left:143.46300000000002px;top:105.75px;font-family:'Liberation Mono',monospace;font-size:8.92px;color:#56595c;font-weight:normal;">4</div>
<div class="a t" style="left:143.46300000000002px;top:120.49px;font-family:'Liberation Mono',monospace;font-size:8.92px;color:#56595c;font-weight:normal;">5</div>
<div class="a t" style="left:143.46300000000002px;top:135.23px;font-family:'Liberation Mono',monospace;font-size:8.92px;color:#a4a3a3;font-weight:normal;">6</div>
<div class="a t" style="left:143.46300000000002px;top:149.97px;font-family:'Liberation Mono',monospace;font-size:8.92px;color:#56595c;font-weight:normal;">7</div>
<div class="a t" style="left:143.46300000000002px;top:164.71px;font-family:'Liberation Mono',monospace;font-size:8.92px;color:#56595c;font-weight:normal;">8</div>
<div class="a t" style="left:143.46300000000002px;top:179.45px;font-family:'Liberation Mono',monospace;font-size:8.92px;color:#56595c;font-weight:normal;">9</div>
<div class="a t" style="left:138.126px;top:194.19px;font-family:'Liberation Mono',monospace;font-size:8.92px;color:#56595c;font-weight:normal;">10</div>
<svg class="a" style="left:171.5px;top:58.50px" width="7" height="10"><path d="M0.7 1.5Q0.7 0.5 1.7 0.5H4.8Q5.8 0.5 5.8 1.5V5.5L3.25 8.5L0.7 5.5Z" fill="#313335" stroke="#757575" stroke-width="0.8"/><path d="M1.8 3.5H4.7" stroke="#757575" stroke-width="0.8"/></svg>
<svg class="a" style="left:171.5px;top:73.24px" width="7" height="10"><path d="M0.7 8.5Q0.7 9.5 1.7 9.5H4.8Q5.8 9.5 5.8 8.5V4.5L3.25 1.5L0.7 4.5Z" fill="#313335" stroke="#757575" stroke-width="0.8"/><path d="M1.8 6.5H4.7" stroke="#757575" stroke-width="0.8"/></svg>
<div class="a" style="left:290.877px;top:56px;width:48.033px;height:14.74px;background:#344134;"></div>
<div class="a" style="left:253.518px;top:70.74px;width:48.033px;height:14.74px;background:#344134;"></div>
<div class="a" style="left:226.83300000000003px;top:129.7px;width:48.033px;height:14.74px;background:#344134;"></div>
<div class="a t" style="left:178.8px;top:61.53px;font-family:'Liberation Mono',monospace;font-size:8.92px;color:#bbbbbb;font-weight:normal;"><span style="color:#cc7832">from</span><span style="color:#a9b7c6"> selenium </span><span style="color:#cc7832">import</span><span style="color:#a9b7c6"> webdriver</span></div>
<div class="a t" style="left:178.8px;top:76.27px;font-family:'Liberation Mono',monospace;font-size:8.92px;color:#bbbbbb;font-weight:normal;"><span style="color:#cc7832">from</span><span style="color:#a9b7c6"> selenium.webdriver.chrome.service </span><span style="color:#cc7832">import</span><span style="color:#a9b7c6"> Service</span></div>
<div class="a t" style="left:178.8px;top:105.75px;font-family:'Liberation Mono',monospace;font-size:8.92px;color:#bbbbbb;font-weight:normal;"><span style="color:#808080">#chrome driver</span></div>
<div class="a t" style="left:178.8px;top:120.49px;font-family:'Liberation Mono',monospace;font-size:8.92px;color:#bbbbbb;font-weight:normal;"><span style="color:#a9b7c6"> service_obj= Service(</span><span style="color:#6a8759">"C:\Users\KARAN\Downloads\chromedriver_win32"</span><span style="color:#a9b7c6">);</span></div>
<div class="a t" style="left:178.8px;top:135.23px;font-family:'Liberation Mono',monospace;font-size:8.92px;color:#bbbbbb;font-weight:normal;"><span style="color:#a9b7c6">driver = </span><span style="color:#a9b7c6">webdriver</span><span style="color:#a9b7c6">.Chrome(</span><span style="color:#aa4926">service</span><span style="color:#a9b7c6">=service_obj)</span></div>
<svg class="a" style="left:312.225px;top:126.76px" width="33.022" height="2"><path d="M0 1.2L1.0 0.4L2.0 1.2L3.0 0.4L4.0 1.2L5.0 0.4L6.0 1.2L7.0 0.4L8.0 1.2L9.0 0.4L10.0 1.2L11.0 0.4L12.0 1.2L13.0 0.4L14.0 1.2L15.0 0.4L16.0 1.2L17.0 0.4L18.0 1.2L19.0 0.4L20.0 1.2L21.0 0.4L22.0 1.2L23.0 0.4L24.0 1.2L25.0 0.4L26.0 1.2L27.0 0.4L28.0 1.2L29.0 0.4L30.0 1.2L31.0 0.4L32.0 1.2" fill="none" stroke="#bc3f3c" stroke-width="0.7" opacity="0.85"/></svg>
<div class="a" style="left:547.553px;top:127.26px;width:4.5px;height:1px;background:#bc3f3c;"></div>
<div class="a" style="left:174.3px;top:127.5px;width:44.8px;height:20.4px;border:2.4px solid #fa0a0f;border-radius:1.5px"></div>
<svg class="a" style="left:188px;top:148px" width="12" height="50"><path d="M6 1.5V40" stroke="#fa0a0f" stroke-width="2.2"/><path d="M2.8 37L6 48.8L9.2 37Z" fill="#fa0a0f"/></svg>
<div class="a t" style="left:181.4px;top:203.28px;font-family:'Liberation Sans',sans-serif;font-size:9.900px;color:#f91a1a;font-weight:normal;-webkit-text-stroke:0.2px #f91a1a;">This is driver</div>
<svg class="a" style="left:965px;top:62.5px" width="7" height="7"><circle cx="3.5" cy="3.5" r="3.5" fill="#c75450"/><rect x="3" y="1.3" width="1" height="2.8" fill="#fff"/><rect x="3" y="4.8" width="1" height="1" fill="#fff"/></svg>
<div class="a t" style="left:975px;top:62.16px;font-family:'Liberation Sans',sans-serif;font-size:8.4px;color:#bbbbbb;font-weight:normal;">2</div>
<svg class="a" style="left:986px;top:63.5px" width="7" height="4"><path d="M0.7 3.6L3.2 1L5.7 3.6" fill="none" stroke="#c8c8c8" stroke-width="1.3"/></svg>
<svg class="a" style="left:1000px;top:64px" width="7" height="4"><path d="M0.7 0.5L3.2 3.1L5.7 0.5" fill="none" stroke="#c8c8c8" stroke-width="1.3"/></svg>
<div class="a" style="left:1001px;top:73.9px;width:9.5px;height:1.6px;background:#2f7f2f;"></div>
<div class="a" style="left:1001px;top:88.60000000000001px;width:9.5px;height:1.6px;background:#2f7f2f;"></div>
<div class="a" style="left:1001px;top:132.79999999999998px;width:9.5px;height:1.6px;background:#b03530;"></div>
<div class="a" style="left:1001px;top:147.29999999999998px;width:9.5px;height:1.6px;background:#2f7f2f;"></div>
<div class="a" style="left:136px;top:500px;width:874px;height:16px;background:#3c3f41;"></div>
<div class="a" style="left:136px;top:500px;width:874px;height:0.6px;background:#323334;"></div>
<div class="a" style="left:1010.6px;top:38px;width:13.4px;height:478px;background:#3c3f41;"></div>
<div class="a" style="left:1010.2px;top:38px;width:0.8px;height:478px;background:#323334;"></div>
<svg class="a" style="left:1014px;top:45.5px" width="9" height="9"><path d="M4 0.8Q6.7 0.8 6.7 4V6.3L7.8 7.5H0.2L1.3 6.3V4Q1.3 0.8 4 0.8Z" fill="#afb1b3"/><rect x="3" y="7.8" width="2" height="1.2" fill="#afb1b3"/></svg>
<svg class="a" style="left:1019.5px;top:45px" width="4" height="4"><circle cx="2" cy="2" r="1.8" fill="#e55b57"/></svg>
<div class="a t" style="left:1021px;top:57.8px;transform-origin:0 0;transform:rotate(90deg);font-family:'Liberation Sans',sans-serif;font-size:7.4px;color:#a8a8a8;line-height:7px">Notifications</div>
<div class="a" style="left:0px;top:515.6px;width:1024px;height:14.8px;background:#3c3f41;"></div>
<div class="a" style="left:0px;top:515.4px;width:1024px;height:0.8px;background:#323334;"></div>
<svg class="a" style="left:23px;top:520.5px" width="7" height="9"><circle cx="1.2" cy="1.2" r="1" fill="#afb1b3"/><circle cx="5.5" cy="1.2" r="1" fill="#afb1b3"/><circle cx="2" cy="8" r="1" fill="#afb1b3"/><path d="M1.2 1.2V8M5.5 1.2Q5.5 5 2 6.5" stroke="#afb1b3" stroke-width="1" fill="none"/></svg>
<div class="a t" style="left:33.4px;top:521.57px;font-family:'Liberation Sans',sans-serif;font-size:7.100px;color:#aeaeae;font-weight:normal;">Version Control</div>
<svg class="a" style="left:98px;top:521.5px" width="6" height="7"><path d="M0 0L5.5 3.3L0 6.6Z" fill="#afb1b3"/></svg>
<div class="a t" style="left:108.4px;top:521.57px;font-family:'Liberation Sans',sans-serif;font-size:7.100px;transform-origin:0 0;transform:scaleX(0.933);color:#aeaeae;font-weight:normal;">Run</div>
<svg class="a" style="left:134px;top:520.5px" width="9" height="8"><path d="M4.5 0L8.5 2L4.5 4L0.5 2Z" fill="#afb1b3"/><path d="M0.5 4L4.5 6L8.5 4M0.5 5.8L4.5 7.8L8.5 5.8" stroke="#afb1b3" stroke-width="0.9" fill="none"/></svg>
<div class="a t" style="left:145.9px;top:521.57px;font-family:'Liberation Sans',sans-serif;font-size:7.100px;transform-origin:0 0;transform:scaleX(0.942);color:#aeaeae;font-weight:normal;">Python Packages</div>
<svg class="a" style="left:212.7px;top:521px" width="7" height="7"><path d="M0 0.5H7M0 2.5H7M0 4.5H7M0 6.5H7" stroke="#afb1b3" stroke-width="1"/><path d="M1.5 0V7" stroke="#3c3f41" stroke-width="0.6"/></svg>
<div class="a t" style="left:223.3px;top:521.57px;font-family:'Liberation Sans',sans-serif;font-size:7.100px;transform-origin:0 0;transform:scaleX(0.906);color:#aeaeae;font-weight:normal;">TODO</div>
<svg class="a" style="left:257px;top:520.5px" width="7" height="8" viewBox="0 0 10 10"><path d="M5 0.3Q2.6 0.3 2.6 1.6V3H5.2V3.5H1.6Q0.2 3.5 0.2 5.3Q0.2 7.1 1.6 7.1H2.6V5.8Q2.6 4.7 3.7 4.7H6.3Q7.3 4.7 7.3 3.7V1.6Q7.3 0.3 5 0.3Z" fill="#afb1b3"/><path d="M5 9.7Q7.4 9.7 7.4 8.4V7H4.8V6.5H8.4Q9.8 6.5 9.8 4.7Q9.8 2.9 8.4 2.9H7.4V4.2Q7.4 5.3 6.3 5.3H3.7Q2.7 5.3 2.7 6.3V8.4Q2.7 9.7 5 9.7Z" fill="#afb1b3"/></svg>
<div class="a t" style="left:267.3px;top:521.57px;font-family:'Liberation Sans',sans-serif;font-size:7.100px;transform-origin:0 0;transform:scaleX(0.960);color:#aeaeae;font-weight:normal;">Python Console</div>
<svg class="a" style="left:331px;top:520.5px" width="7" height="7"><circle cx="3.5" cy="3.5" r="3.5" fill="#c75450"/><rect x="3" y="1.3" width="1" height="2.8" fill="#fff"/><rect x="3" y="4.8" width="1" height="1" fill="#fff"/></svg>
<div class="a t" style="left:341.5px;top:521.57px;font-family:'Liberation Sans',sans-serif;font-size:7.100px;transform-origin:0 0;transform:scaleX(0.967);color:#aeaeae;font-weight:normal;">Problems</div>
<svg class="a" style="left:385.3px;top:520.5px" width="8" height="7"><rect x="0" y="0" width="8" height="7" fill="#afb1b3"/><path d="M1.5 1.5L3.2 3L1.5 4.5M3.8 5.2H6" stroke="#3c3f41" stroke-width="0.8" fill="none"/></svg>
<div class="a t" style="left:396.5px;top:521.57px;font-family:'Liberation Sans',sans-serif;font-size:7.100px;transform-origin:0 0;transform:scaleX(0.982);color:#aeaeae;font-weight:normal;">Terminal</div>
<svg class="a" style="left:436px;top:520.5px" width="8" height="8"><path d="M4 0L7.5 2V6L4 8L0.5 6V2Z" fill="#afb1b3"/><path d="M3 2.5L5.5 4L3 5.5Z" fill="#3c3f41"/></svg>
<div class="a t" style="left:447.8px;top:521.57px;font-family:'Liberation Sans',sans-serif;font-size:7.100px;transform-origin:0 0;transform:scaleX(0.926);color:#aeaeae;font-weight:normal;">Services</div>
<div class="a" style="left:0px;top:530.4px;width:1024px;height:12.6px;background:#3c3f41;"></div>
<div class="a" style="left:0px;top:530.2px;width:1024px;height:0.6px;background:#323334;"></div>
<svg class="a" style="left:3.5px;top:533px" width="9" height="9"><rect x="2" y="0.5" width="6.5" height="6.5" fill="none" stroke="#8e9092" stroke-width="1"/><path d="M0.5 2V8.5H7" fill="none" stroke="#8e9092" stroke-width="1"/></svg>
<div class="a t" style="left:18px;top:534.68px;font-family:'Liberation Sans',sans-serif;font-size:7.900px;color:#aeaeae;font-weight:normal;">Installing packages failed: Installing packages: error occurred. Details... (today 16:40)</div>
<div class="a t" style="left:818px;top:534.68px;font-family:'Liberation Sans',sans-serif;font-size:7.900px;transform-origin:0 0;transform:scaleX(0.933);color:#aeaeae;font-weight:normal;">6:10</div>
<div class="a t" style="left:840px;top:534.68px;font-family:'Liberation Sans',sans-serif;font-size:7.900px;transform-origin:0 0;transform:scaleX(0.850);color:#aeaeae;font-weight:normal;">CRLF</div>
<div class="a t" style="left:866px;top:534.68px;font-family:'Liberation Sans',sans-serif;font-size:7.900px;transform-origin:0 0;transform:scaleX(0.955);color:#aeaeae;font-weight:normal;">UTF-8</div>
<div class="a t" style="left:894px;top:534.68px;font-family:'Liberation Sans',sans-serif;font-size:7.900px;color:#aeaeae;font-weight:normal;">1 space*</div>
<div class="a t" style="left:933px;top:534.68px;font-family:'Liberation Sans',sans-serif;font-size:7.900px;transform-origin:0 0;transform:scaleX(0.986);color:#aeaeae;font-weight:normal;">Python 3.10 (demo)</div>
<svg class="a" style="left:1009px;top:533px" width="8" height="8"><path d="M1.2 3.5V2.2Q1.2 0.5 3 0.5Q4.8 0.5 4.8 2.2" fill="none" stroke="#afb1b3" stroke-width="1"/><rect x="2.5" y="3.5" width="5.5" height="4.5" fill="#afb1b3"/></svg>
</body></html>
